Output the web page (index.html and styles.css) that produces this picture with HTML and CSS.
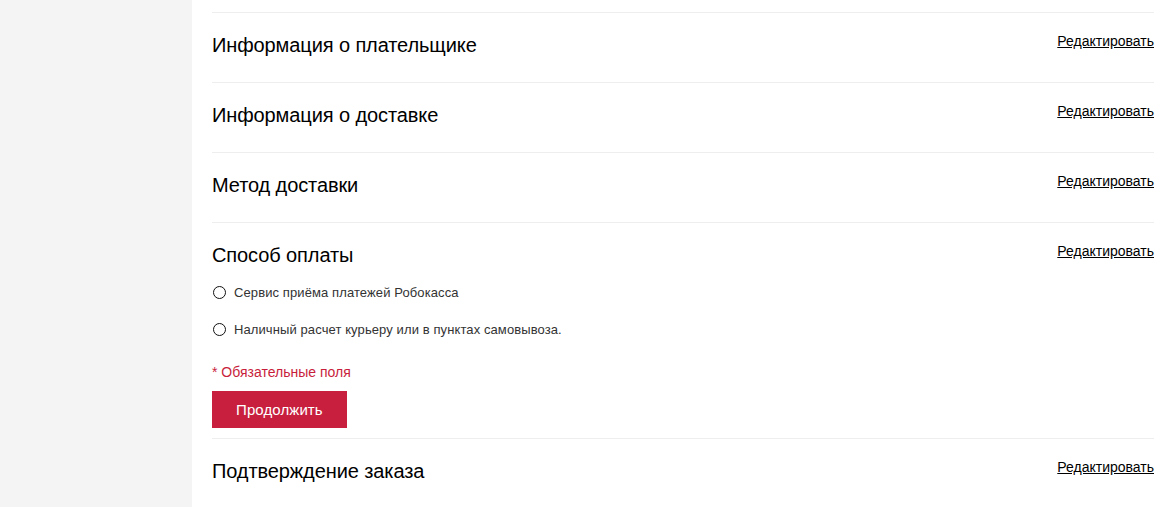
FILE: index.html
```html
<!DOCTYPE html>
<html>
<head>
    <title>Оформление заказа</title>
    <link rel="stylesheet" href="styles.css">
</head>
<body>
    <div class="page">
        <div class="sidebar"></div>
        <div class="checkout">
            <div class="step">
                <div class="step-head">
                    <span class="step-title">Информация о плательщике</span>
                    <a href="#" class="edit-link">Редактировать</a>
                </div>
            </div>
            <div class="step">
                <div class="step-head">
                    <span class="step-title">Информация о доставке</span>
                    <a href="#" class="edit-link">Редактировать</a>
                </div>
            </div>
            <div class="step">
                <div class="step-head">
                    <span class="step-title">Метод доставки</span>
                    <a href="#" class="edit-link">Редактировать</a>
                </div>
            </div>
            <div class="step step-active">
                <div class="step-head">
                    <span class="step-title">Способ оплаты</span>
                    <a href="#" class="edit-link">Редактировать</a>
                </div>
                <div class="payment-list">
                    <label class="payment-row">
                        <input type="radio" name="payment" class="radio">
                        <span>Сервис приёма платежей Робокасса</span>
                    </label>
                    <label class="payment-row">
                        <input type="radio" name="payment" class="radio">
                        <span>Наличный расчет курьеру или в пунктах самовывоза.</span>
                    </label>
                </div>
                <div class="required-note">* Обязательные поля</div>
                <button class="continue-btn">Продолжить</button>
            </div>
            <div class="step">
                <div class="step-head">
                    <span class="step-title">Подтверждение заказа</span>
                    <a href="#" class="edit-link">Редактировать</a>
                </div>
            </div>
        </div>
    </div>
</body>
</html>
```

FILE: styles.css
```css
body {
    margin: 0;
    font-family: "Liberation Sans", Arial, sans-serif;
    color: #000;
    background: #fff;
}
.page {
    display: flex;
    min-height: 507px;
}
.sidebar {
    width: 192px;
    flex-shrink: 0;
    background: #f4f4f4;
}
.checkout {
    flex: 1;
    padding: 12px 8px 0 20px;
}
.step {
    border-top: 1px solid #eeeeee;
    padding: 20px 0 25px;
}
.step-active {
    padding-bottom: 10px;
}
.step-head {
    display: flex;
    justify-content: space-between;
    align-items: flex-start;
}
.step-title {
    font-size: 20px;
    line-height: 24px;
    letter-spacing: -0.1px;
}
.edit-link {
    font-size: 14px;
    line-height: 16px;
    color: #000;
    text-decoration: underline;
}
.payment-list {
    display: flex;
    flex-direction: column;
    gap: 17px;
    margin-top: 15px;
}
.payment-row {
    display: flex;
    align-items: center;
    gap: 8px;
    height: 20px;
    font-size: 13px;
    letter-spacing: 0.1px;
    color: #333;
}
.radio {
    appearance: none;
    width: 13px;
    height: 13px;
    margin: 0 0 0 1px;
    border: 1.5px solid #111;
    border-radius: 50%;
    background: #fff;
}
.required-note {
    margin-top: 25px;
    font-size: 14px;
    line-height: 16px;
    color: #c81e3c;
}
.continue-btn {
    display: block;
    margin-top: 11px;
    height: 37px;
    padding: 0 24px;
    border: none;
    background: #c81f3e;
    color: #fff;
    font-family: "Liberation Sans", Arial, sans-serif;
    font-size: 15px;
    letter-spacing: 0.1px;
    cursor: pointer;
}
```
